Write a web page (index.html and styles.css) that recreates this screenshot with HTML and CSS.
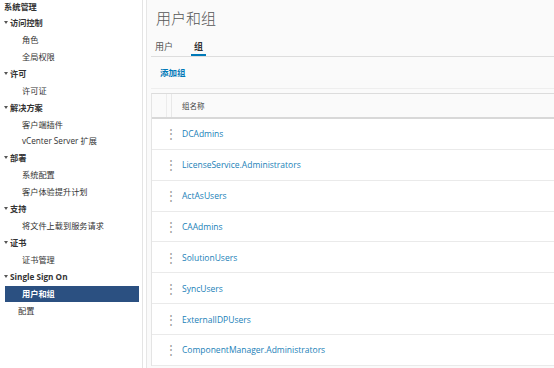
FILE: index.html
```html
<!DOCTYPE html>
<html lang="zh">

<head>
    <meta charset="UTF-8">
    <title>用户和组</title>
    <link rel="stylesheet" href="styles.css">
</head>

<body>
    <div class="layout">
        <!-- 左侧导航 -->
        <div class="sidebar">
            <div class="nav-title">系统管理</div>
            <div class="nav-group">访问控制</div>
            <div class="nav-item">角色</div>
            <div class="nav-item">全局权限</div>
            <div class="nav-group">许可</div>
            <div class="nav-item">许可证</div>
            <div class="nav-group">解决方案</div>
            <div class="nav-item">客户端插件</div>
            <div class="nav-item">vCenter Server 扩展</div>
            <div class="nav-group">部署</div>
            <div class="nav-item">系统配置</div>
            <div class="nav-item">客户体验提升计划</div>
            <div class="nav-group">支持</div>
            <div class="nav-item">将文件上载到服务请求</div>
            <div class="nav-group">证书</div>
            <div class="nav-item">证书管理</div>
            <div class="nav-group">Single Sign On</div>
            <div class="nav-item active">用户和组</div>
            <div class="nav-item">配置</div>
        </div>
        <div class="splitter"></div>

        <!-- 主内容 -->
        <div class="main">
            <h1 class="page-title">用户和组</h1>
            <div class="tabs">
                <span class="tab">用户</span>
                <span class="tab selected">组</span>
            </div>
            <div class="toolbar">
                <a class="add-link">添加组</a>
            </div>
            <div class="grid">
                <div class="grid-head">
                    <div class="cell-action"></div>
                    <div class="cell-name">组名称</div>
                </div>
                <div class="grid-row"><div class="cell-action"><span class="dots">⋮</span></div><div class="cell-name"><a>DCAdmins</a></div></div>
                <div class="grid-row"><div class="cell-action"><span class="dots">⋮</span></div><div class="cell-name"><a>LicenseService.Administrators</a></div></div>
                <div class="grid-row"><div class="cell-action"><span class="dots">⋮</span></div><div class="cell-name"><a>ActAsUsers</a></div></div>
                <div class="grid-row"><div class="cell-action"><span class="dots">⋮</span></div><div class="cell-name"><a>CAAdmins</a></div></div>
                <div class="grid-row"><div class="cell-action"><span class="dots">⋮</span></div><div class="cell-name"><a>SolutionUsers</a></div></div>
                <div class="grid-row"><div class="cell-action"><span class="dots">⋮</span></div><div class="cell-name"><a>SyncUsers</a></div></div>
                <div class="grid-row"><div class="cell-action"><span class="dots">⋮</span></div><div class="cell-name"><a>ExternalIDPUsers</a></div></div>
                <div class="grid-row"><div class="cell-action"><span class="dots">⋮</span></div><div class="cell-name"><a>ComponentManager.Administrators</a></div></div>
            </div>
        </div>
    </div>
</body>

</html>
```

FILE: styles.css
```css
body {
    margin: 0;
    padding: 0;
    font-family: 'Open Sans', 'Noto Sans CJK SC', sans-serif;
    font-size: 8.2px;
    color: #333;
    background: #fafafa;
    overflow: hidden;
}

.layout {
    display: flex;
    height: 368px;
}

/* 左侧导航 */
.sidebar {
    width: 143px;
    background: #fff;
    border-right: 1px solid #e4e4e4;
    box-sizing: border-box;
}

.nav-title {
    font-weight: bold;
    padding-left: 4px;
    height: 14px;
    line-height: 13px;
}

.nav-group,
.nav-item {
    height: 16.93px;
    line-height: 17px;
    white-space: nowrap;
}

.nav-group {
    font-weight: bold;
    padding-left: 10px;
    position: relative;
}

/* 折叠箭头 */
.nav-group::before {
    content: "";
    position: absolute;
    left: 4px;
    top: 7px;
    border-left: 2px solid transparent;
    border-right: 2px solid transparent;
    border-top: 3px solid #555;
}

.nav-item {
    padding-left: 22px;
}

.nav-item.active {
    background: #2b5081;
    color: #fff;
    font-weight: bold;
    margin: 1px 3px 0 5px;
    padding-left: 17px;
    height: 16px;
    line-height: 16px;
}

.nav-item.active + .nav-item {
    padding-left: 18px;
}

.splitter {
    width: 3px;
    background: #fff;
    border-right: 1px solid #e6e6e6;
}

/* 主内容 */
.main {
    flex: 1;
    padding-left: 4px;
    min-width: 0;
}

.page-title {
    margin: 7px 0 0 5px;
    font-size: 15px;
    font-weight: 300;
    color: #565656;
    height: 22px;
    line-height: 22px;
}

.tabs {
    margin-top: 11px;
    height: 16px;
    border-bottom: 1px solid #ddd;
    display: flex;
    gap: 15px;
    padding-left: 1px;
}

.tab {
    color: #555;
    font-size: 9px;
    line-height: 14px;
    padding: 0 3px;
}

.tab.selected {
    color: #333;
    font-weight: bold;
    border-bottom: 2px solid #0079b8;
}

.toolbar {
    padding: 9px 0 0 9px;
    height: 32px;
    border-bottom: 1px solid #eee;
    box-sizing: border-box;
    margin-bottom: 4px;
}

.add-link {
    color: #0079b8;
    font-weight: bold;
    font-size: 8.5px;
}

.grid {
    background: #fff;
    border-top: 1px solid #dcdcdc;
    border-left: 1px solid #e4e4e4;
}

.grid-head,
.grid-row {
    display: flex;
    align-items: center;
}

.grid-head {
    height: 23px;
    background: #fafafa;
    border-bottom: 2px solid #d8d8d8;
    font-size: 7.5px;
    color: #444;
}

.grid-head .cell-action {
    width: 20px;
    height: 23px;
    border-right: 1px solid #e8e8e8;
    box-shadow: inset -4px 0 0 #fafafa, inset -5px 0 0 #ececec;
}

.grid-head .cell-name {
    padding-left: 10px;
}

.grid-row {
    height: 29.86px;
    border-bottom: 1px solid #eaeaea;
}

.cell-action {
    width: 25px;
    display: flex;
    justify-content: flex-end;
    box-sizing: border-box;
}

.grid-row .cell-action {
    flex: none;
    width: 22px;
}

.cell-name {
    padding-left: 5px;
}

.grid-row .cell-name {
    padding-left: 8px;
}

.dots {
    color: #999;
    font-size: 12px;
    margin-right: -3px;
}

.grid-row a {
    color: #1b7fb8;
    font-size: 8.5px;
}
```
